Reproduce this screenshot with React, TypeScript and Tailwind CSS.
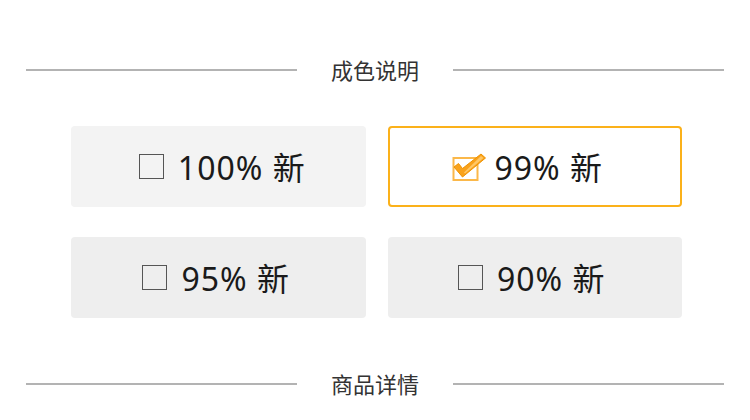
import React from 'react';

const options = [
  { label: '100% 新', checked: false, bg: 'bg-[#f3f3f3]', pad: 'pl-[8px]' },
  { label: '99% 新', checked: true, bg: 'bg-white', pad: 'pr-[14px]' },
  { label: '95% 新', checked: false, bg: 'bg-[#eeeeee]', pad: 'pr-[4px]' },
  { label: '90% 新', checked: false, bg: 'bg-[#eeeeee]', pad: 'pr-[6px]' },
];

function SectionTitle({ title }: { title: string }) {
  return (
    <div className="flex items-center h-[40px] px-[26px]">
      <div className="flex-1 h-[2px] bg-[#b3b3b3]" />
      <span className="mx-[34px] text-[22px] text-[#333] leading-none">{title}</span>
      <div className="flex-1 h-[2px] bg-[#b3b3b3]" />
    </div>
  );
}

function CheckedIcon() {
  return (
    <svg width="34" height="28" viewBox="0 0 34 28" className="shrink-0">
      <rect x="1.5" y="5" width="24" height="22" fill="none" stroke="#fbb84a" strokeWidth="2" />
      <polygon
        points="2,14 6.5,10.5 10.5,15.5 29,1 33.5,5 10.5,24"
        fill="#f9a21b"
        stroke="#ee9200"
        strokeWidth="1"
        strokeLinejoin="round"
      />
      <polygon points="29,3 31.5,5 13,20.5 12,19.5" fill="#ffc766" />
    </svg>
  );
}

export default function App() {
  return (
    <div
      className="w-[750px] h-[420px] bg-white overflow-hidden pt-[50px]"
      style={{ fontFamily: '"Noto Sans", "Noto Sans CJK SC", sans-serif' }}
    >
      <SectionTitle title="成色说明" />
      <div className="ml-[71px] w-[611px] mt-[36px] grid grid-cols-2 gap-x-[22px] gap-y-[30px]">
        {options.map((o) => (
          <div
            key={o.label}
            className={`h-[81px] rounded-[4px] flex items-center justify-center ${o.bg} ${o.pad} ${
              o.checked ? 'border-2 border-[#fbb11a]' : ''
            }`}
          >
            {o.checked ? (
              <CheckedIcon />
            ) : (
              <div className="w-[25px] h-[25px] border-[1.5px] border-[#555] shrink-0" />
            )}
            <span
              className={`text-[32px] tracking-[1px] text-[#1a1a1a] leading-none pt-[2px] ${
                o.checked ? 'ml-[8px]' : 'ml-[14px]'
              }`}
            >
              {o.label}
            </span>
          </div>
        ))}
      </div>
      <div className="mt-[46px]">
        <SectionTitle title="商品详情" />
      </div>
    </div>
  );
}
